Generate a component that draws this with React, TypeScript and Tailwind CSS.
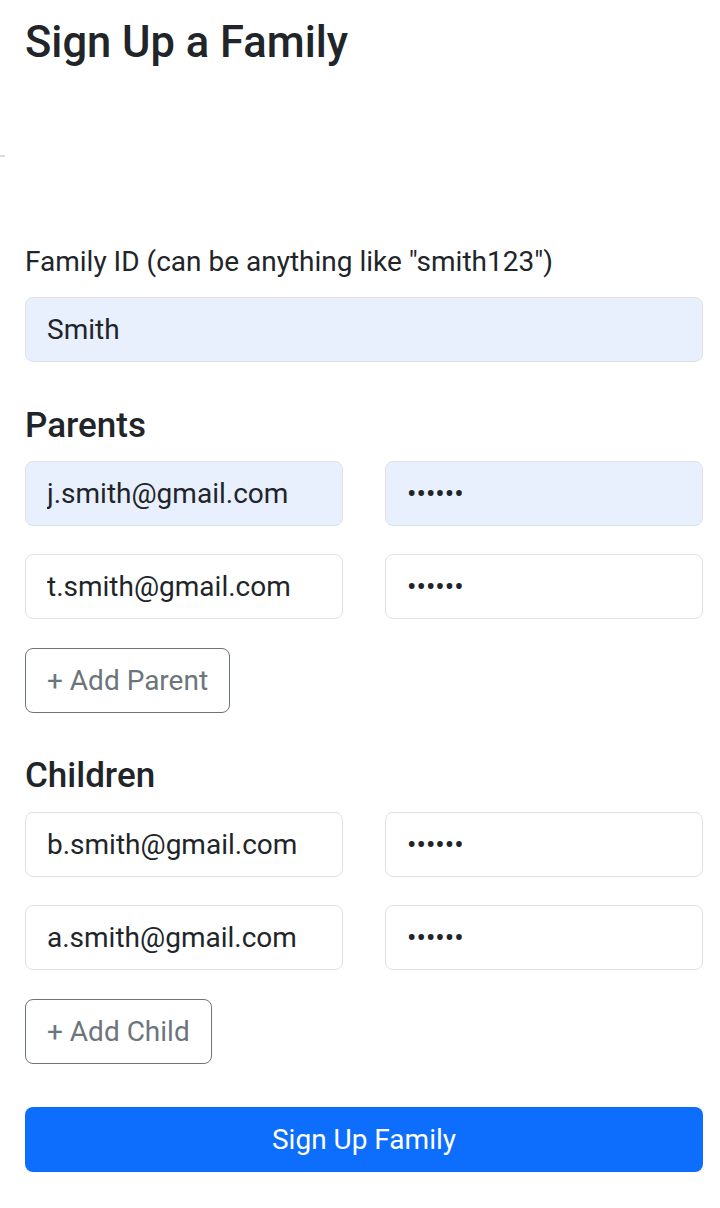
import { useState } from 'react';

interface Account {
  email: string;
  password: string;
  filled?: boolean;
}

const inputBase =
  'h-[65px] w-full rounded-[8px] border border-[#dee2e6] px-[21px] text-[28px] text-[#212529] outline-none';

function AccountRow({ account }: { account: Account }) {
  const bg = account.filled ? 'bg-[#e8f0fe]' : 'bg-white';
  return (
    <div className="grid grid-cols-2 gap-[42px]">
      <input className={`${inputBase} ${bg}`} defaultValue={account.email} readOnly />
      <input className={`${inputBase} ${bg}`} type="password" defaultValue={account.password} readOnly />
    </div>
  );
}

export default function App() {
  const [parents] = useState<Account[]>([
    { email: 'j.smith@gmail.com', password: 'secret', filled: true },
    { email: 't.smith@gmail.com', password: 'secret' },
  ]);
  const [children] = useState<Account[]>([
    { email: 'b.smith@gmail.com', password: 'secret' },
    { email: 'a.smith@gmail.com', password: 'secret' },
  ]);

  return (
    <div className="min-h-[1208px] bg-white font-['Roboto',sans-serif] text-[#212529]">
      <div className="pl-[25px] pr-[17px] pt-[17px]">
        <h1 className="text-[43.5px] font-medium leading-[51px]">Sign Up a Family</h1>
      </div>

      {/* stray rule edge at the left */}
      <div className="mt-[87px] h-[2px] w-[5px] bg-[#dcdcdc]" />

      <div className="pl-[25px] pr-[17px]">
        <label className="mt-[88px] block text-[28px] leading-[34px]">
          Family ID (can be anything like "smith123")
        </label>
        <input
          className="mt-[18px] h-[65px] w-full rounded-[8px] border border-[#dee2e6] bg-[#e8f0fe] px-[21px] text-[28px] text-[#212529] outline-none"
          defaultValue="Smith"
          readOnly
        />

        <h2 className="mt-[43px] text-[35px] font-medium leading-[42px]">Parents</h2>
        <div className="mt-[14px] flex flex-col gap-[28px]">
          {parents.map((p) => (
            <AccountRow key={p.email} account={p} />
          ))}
        </div>
        <button className="mt-[29px] h-[65px] rounded-[8px] border border-[#6c757d] bg-white px-[21px] text-[28px] text-[#6c757d]">
          + Add Parent
        </button>

        <h2 className="mt-[42px] text-[35px] font-medium leading-[42px]">Children</h2>
        <div className="mt-[15px] flex flex-col gap-[28px]">
          {children.map((c) => (
            <AccountRow key={c.email} account={c} />
          ))}
        </div>
        <button className="mt-[29px] h-[65px] rounded-[8px] border border-[#6c757d] bg-white px-[21px] text-[28px] text-[#6c757d]">
          + Add Child
        </button>

        <button className="mt-[43px] block h-[65px] w-full rounded-[8px] bg-[#0d6efd] text-[28px] text-white">
          Sign Up Family
        </button>
      </div>
    </div>
  );
}
